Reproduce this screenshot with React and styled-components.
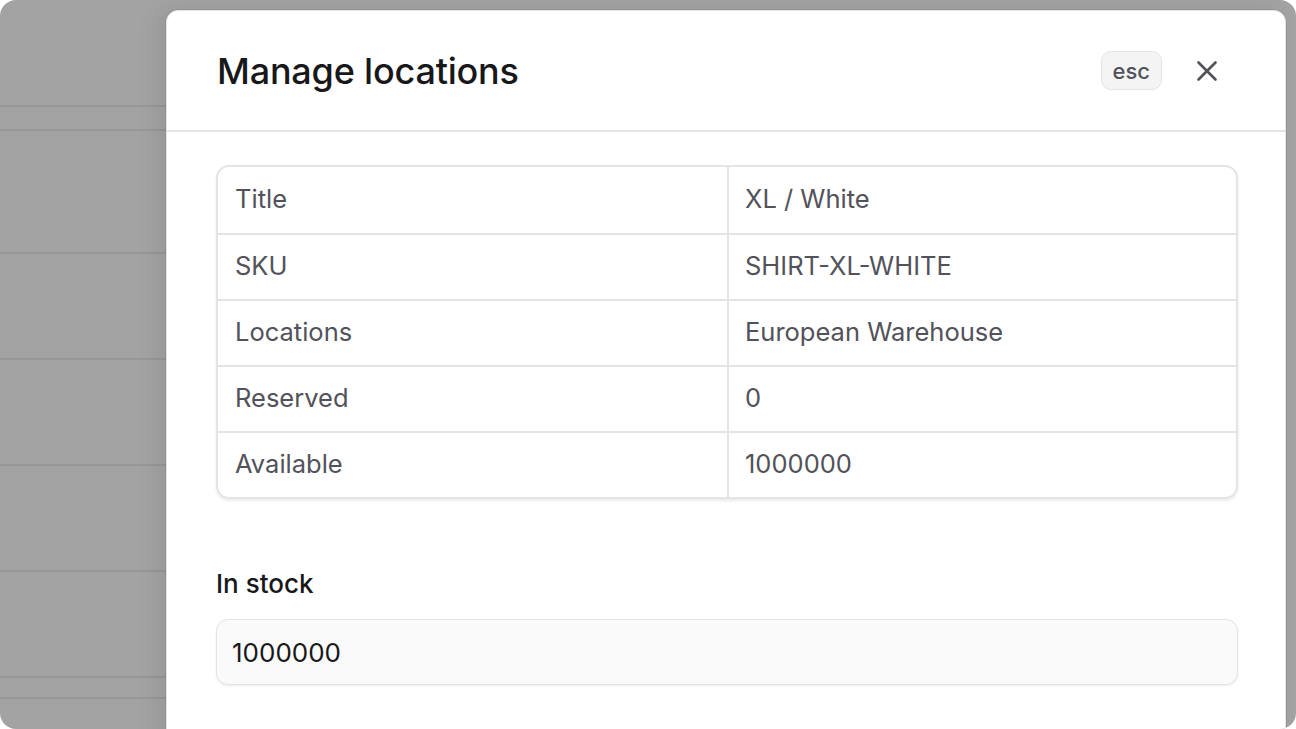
import React from 'react';
import styled, { createGlobalStyle } from 'styled-components';

const GlobalStyle = createGlobalStyle`
    html, body {
        margin: 0;
        padding: 0;
        background: #ffffff;
    }
    body {
        font-family: Inter, "Noto Sans", "Liberation Sans", sans-serif;
        -webkit-font-smoothing: antialiased;
    }
`;

const Screen = styled.div`
    position: relative;
    width: 1296px;
    height: 729px;
    border-radius: 16px;
    overflow: hidden;
    background: #a3a3a3;
`;

const Backdrop = styled.div`
    display: flex;
    flex-direction: column;
    width: 180px;
    padding-top: 105px;
`;

const BackRow = styled.div`
    height: ${(p) => p.h}px;
    box-sizing: border-box;
    border-top: 2px solid #979797;
`;

const Modal = styled.div`
    position: absolute;
    top: 10px;
    left: 166px;
    width: 1120px;
    height: 760px;
    background: #ffffff;
    border: 1px solid #e4e4e7;
    border-radius: 12px;
    box-shadow: -8px 0 24px rgba(0, 0, 0, 0.08), 0 0 0 1px rgba(0, 0, 0, 0.05);
    box-sizing: border-box;
    display: flex;
    flex-direction: column;
`;

const Header = styled.header`
    height: 121px;
    box-sizing: border-box;
    padding: 0 66px 0 50px;
    display: flex;
    justify-content: space-between;
    align-items: center;
    border-bottom: 2px solid #e4e4e7;
`;

const Title = styled.h1`
    margin: 0;
    font-size: 36px;
    font-weight: 500;
    color: #18181b;
    letter-spacing: -0.2px;
`;

const Actions = styled.div`
    display: flex;
    align-items: center;
    gap: 33px;
`;

const Kbd = styled.span`
    display: inline-flex;
    align-items: center;
    justify-content: center;
    height: 39px;
    padding: 0 11px;
    box-sizing: border-box;
    border: 1.5px solid #e4e4e7;
    border-radius: 10px;
    background: #f4f4f5;
    color: #52525b;
    font-size: 22px;
    font-weight: 500;
`;

const CloseButton = styled.button`
    display: flex;
    align-items: center;
    justify-content: center;
    padding: 0;
    border: none;
    background: transparent;
    color: #52525b;
    cursor: pointer;
`;

const Body = styled.div`
    padding: 33px 47px 0 49px;
    display: flex;
    flex-direction: column;
`;

const Table = styled.div`
    border: 2px solid #e4e4e7;
    border-radius: 13px;
    box-shadow: 0 2px 3px rgba(0, 0, 0, 0.08);
    overflow: hidden;
    display: grid;
    grid-template-columns: 509px 1fr;
`;

const Cell = styled.div`
    height: 66px;
    box-sizing: border-box;
    display: flex;
    align-items: center;
    padding-left: ${(p) => (p.value ? 16 : 17)}px;
    padding-bottom: 3px;
    font-size: 25.5px;
    color: #52525b;
    border-top: ${(p) => (p.first ? 'none' : '2px solid #e4e4e7')};
    border-left: ${(p) => (p.value ? '2px solid #e4e4e7' : 'none')};
`;

const Field = styled.label`
    margin-top: 69px;
    display: flex;
    flex-direction: column;
    gap: 20px;
`;

const Label = styled.span`
    font-size: 26px;
    font-weight: 500;
    color: #18181b;
`;

const Input = styled.input`
    height: 66px;
    box-sizing: border-box;
    padding: 0 15px;
    border: 1.5px solid #e4e4e7;
    border-radius: 12px;
    background: #fafafa;
    box-shadow: 0 1px 2px rgba(0, 0, 0, 0.08);
    font-family: inherit;
    font-size: 26px;
    color: #18181b;
    outline: none;
`;

const rows = [
    ['Title', 'XL / White'],
    ['SKU', 'SHIRT-XL-WHITE'],
    ['Locations', 'European Warehouse'],
    ['Reserved', '0'],
    ['Available', '1000000'],
];

const backRows = [24, 123, 106, 106, 106, 106, 21, 40];

function App() {
    return (
        <>
            <GlobalStyle />
            <Screen>
                <Backdrop>
                    {backRows.map((h, i) => <BackRow key={i} h={h} />)}
                </Backdrop>
                <Modal>
                    <Header>
                        <Title>Manage locations</Title>
                        <Actions>
                            <Kbd>esc</Kbd>
                            <CloseButton aria-label="Close">
                                <svg width="24" height="24" viewBox="0 0 24 24" fill="none" stroke="currentColor" strokeWidth="2.6" strokeLinecap="round">
                                    <path d="M3.5 3.5L20.5 20.5M20.5 3.5L3.5 20.5" />
                                </svg>
                            </CloseButton>
                        </Actions>
                    </Header>
                    <Body>
                        <Table>
                            {rows.map(([k, v], i) => (
                                <React.Fragment key={k}>
                                    <Cell first={i === 0}>{k}</Cell>
                                    <Cell first={i === 0} value>{v}</Cell>
                                </React.Fragment>
                            ))}
                        </Table>
                        <Field>
                            <Label>In stock</Label>
                            <Input defaultValue="1000000" />
                        </Field>
                    </Body>
                </Modal>
            </Screen>
        </>
    );
}

export default App;
